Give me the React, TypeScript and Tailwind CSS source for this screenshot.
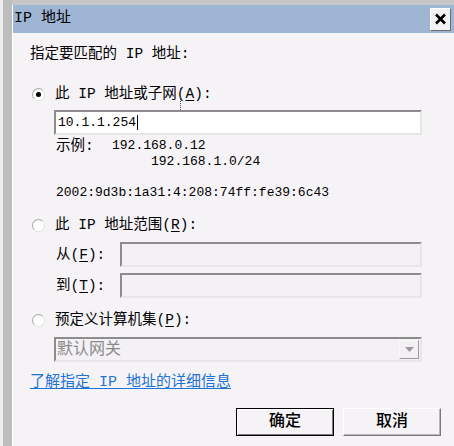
import React from 'react';

function Radio({ checked }: { checked?: boolean }) {
  return (
    <span className="flex h-[13px] w-[13px] items-center justify-center rounded-full border border-t-[#a8a8a8] border-l-[#a8a8a8] border-r-[#e2e2e2] border-b-[#e2e2e2] bg-white">
      {checked && <span className="h-[5px] w-[5px] rounded-full bg-black" />}
    </span>
  );
}

function Key({ k }: { k: string }) {
  return (
    <>
      (<span className="underline underline-offset-2">{k}</span>):
    </>
  );
}

function SunkenBox({ className, children }: { className?: string; children?: React.ReactNode }) {
  return (
    <div
      className={`flex h-[25px] items-center border-2 border-t-[#8c8c8c] border-l-[#8c8c8c] border-r-[#e6e6e6] border-b-[#e6e6e6] ${className ?? ''}`}
    >
      {children}
    </div>
  );
}

export default function App() {
  return (
    <div className="flex h-[446px] w-[454px] overflow-hidden bg-[#c6c6c6] font-['Liberation_Mono','Noto_Sans_CJK_SC',monospace] text-[14.5px] leading-4 text-black">
      <div className="w-[3px] bg-[#ededed]" />
      <div className="w-[9px] bg-[#bdbdbd]" />
      <div className="flex flex-1 flex-col pt-[5px]">
        <div className="flex flex-1 flex-col border-l border-white bg-[#f6f3f6]">
          {/* title bar */}
          <div className="flex h-[28px] items-center justify-between bg-[#9eb6d4] pl-[1px] pr-[3px]">
            <span className="text-[15px]">IP 地址</span>
            <span className="flex h-[23px] w-[21px] items-center justify-center border border-t-white border-l-white border-r-[#6e6e6e] border-b-[#6e6e6e] bg-[#f2f2f2]">
              <svg width="13" height="12" viewBox="0 0 13 12">
                <path d="M2 1.5 L11 10.5 M11 1.5 L2 10.5" stroke="#000" strokeWidth="2.6" />
              </svg>
            </span>
          </div>

          <div className="flex flex-1 flex-col pl-[17px] pr-[13px]">
            <div className="mt-[13px]">指定要匹配的 IP 地址:</div>

            <div className="mt-[24px] ml-[2px] flex items-center gap-[10px]">
              <Radio checked />
              <span>
                此 IP 地址或子网<Key k="A" />
              </span>
            </div>

            <div className="relative ml-[24px] mt-[8px] w-[368px]">
              <span className="absolute -top-[22px] left-[126px] h-[22px] border-l border-dotted border-[#555]" />
              <SunkenBox className="bg-white pl-[2px]">
                <span className="text-[13px]">10.1.1.254</span>
                <span className="ml-[1px] h-[15px] w-px bg-black" />
              </SunkenBox>
            </div>

            <div className="ml-[26px] mt-[3px] flex">
              <span className="w-[56px]">示例:</span>
              <div className="flex flex-col text-[13px]">
                <span>192.168.0.12</span>
                <span className="ml-[39px]">192.168.1.0/24</span>
              </div>
            </div>

            <div className="ml-[26px] mt-[15px] text-[13px]">2002:9d3b:1a31:4:208:74ff:fe39:6c43</div>

            <div className="mt-[16px] ml-[2px] flex items-center gap-[10px]">
              <Radio />
              <span>
                此 IP 地址范围<Key k="R" />
              </span>
            </div>

            <div className="ml-[26px] mt-[9px] flex items-center">
              <span className="w-[64px]">
                从<Key k="F" />
              </span>
              <SunkenBox className="w-[302px] bg-[#f4f1f4]" />
            </div>
            <div className="ml-[26px] mt-[6px] flex items-center">
              <span className="w-[64px]">
                到<Key k="T" />
              </span>
              <SunkenBox className="w-[302px] bg-[#f4f1f4]" />
            </div>

            <div className="mt-[14px] ml-[2px] flex items-center gap-[10px]">
              <Radio />
              <span>
                预定义计算机集<Key k="P" />
              </span>
            </div>

            <div className="ml-[24px] mt-[9px] w-[368px]">
              <SunkenBox className="justify-between bg-[#f4f1f4] pl-[1px] pr-[1px]">
                <span className="text-[16px] text-[#8a8a8a]">默认网关</span>
                <span className="flex h-[19px] w-[20px] items-center justify-center border border-t-[#f8f8f8] border-l-[#f8f8f8] border-r-[#9a9a9a] border-b-[#9a9a9a] bg-[#f2f0f2]">
                  <svg width="9" height="5" viewBox="0 0 9 5">
                    <path d="M0 0 H9 L4.5 5 Z" fill="#9a9a9a" />
                  </svg>
                </span>
              </SunkenBox>
            </div>

            <a href="#" className="mt-[13px] w-fit text-[15px] text-[#1e73d6] underline underline-offset-2">
              了解指定 IP 地址的详细信息
            </a>

            <div className="mt-[17px] flex justify-end gap-[9px]">
              <button className="flex h-[28px] w-[98px] items-center justify-center border border-black bg-[#f5f3f5] text-[16px] font-medium shadow-[inset_1px_1px_0_#ffffff,inset_-1px_-1px_0_#7a7a7a]">
                确定
              </button>
              <button className="flex h-[28px] w-[98px] items-center justify-center border border-t-white border-l-white border-r-[#7a7a7a] border-b-[#7a7a7a] bg-[#f5f3f5] text-[16px] font-medium shadow-[inset_-1px_-1px_0_#b8b8b8]">
                取消
              </button>
            </div>
          </div>
        </div>
      </div>
    </div>
  );
}
